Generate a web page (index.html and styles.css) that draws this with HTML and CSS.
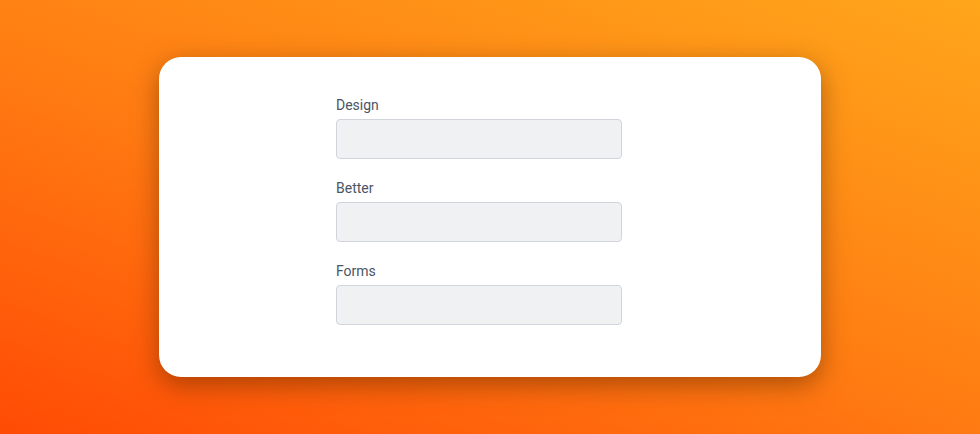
FILE: index.html
```html
<!DOCTYPE html>
<html>
<head>
    <title>Design Better Forms</title>
    <meta charset="utf-8">
    <link rel="stylesheet" href="styles.css">
</head>
<body>
    <div class="card">
        <form class="form">
            <div class="field">
                <label for="design">Design</label>
                <input id="design" type="text">
            </div>
            <div class="field">
                <label for="better">Better</label>
                <input id="better" type="text">
            </div>
            <div class="field">
                <label for="forms">Forms</label>
                <input id="forms" type="text">
            </div>
        </form>
    </div>
</body>
</html>
```
FILE: styles.css
```css
html, body {
    height: 100%;
}

body {
    margin: 0;
    font-family: Roboto, "Liberation Sans", sans-serif;
    background: linear-gradient(20deg, #ff4b05 0%, #ff7a12 45%, #ffa61b 100%);
    display: flex;
    align-items: center;
    justify-content: center;
}

.card {
    width: 662px;
    box-sizing: border-box;
    padding: 38px 199px 52px 177px;
    background-color: white;
    border-radius: 22px;
    box-shadow: 0 8px 26px rgba(90, 40, 0, 0.5);
}

.form {
    display: flex;
    flex-direction: column;
    gap: 19px;
}

.field label {
    display: block;
    font-size: 14px;
    line-height: 20px;
    color: #4b5563;
    margin-bottom: 4px;
}

.field input {
    display: block;
    width: 100%;
    height: 40px;
    box-sizing: border-box;
    background-color: #f0f1f3;
    border: 1px solid #d1d5db;
    border-radius: 4px;
    margin: 0;
}
```
